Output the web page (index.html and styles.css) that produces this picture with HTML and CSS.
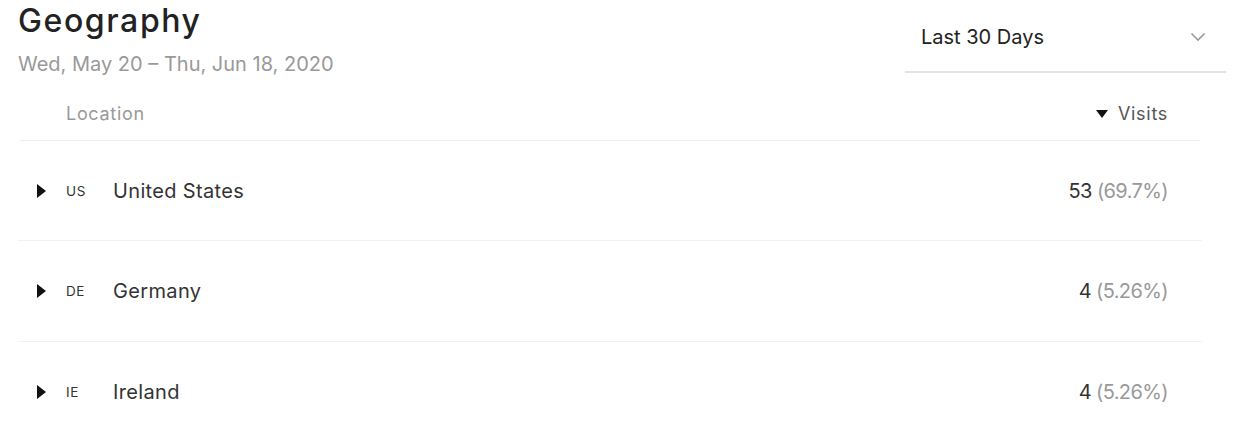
FILE: index.html
```html
<!DOCTYPE html>
<html>
<head>
<meta charset="utf-8">
<link rel="stylesheet" href="styles.css">
</head>
<body>
<div class="panel">
  <div class="top">
    <div class="titles">
      <h1 class="title">Geography</h1>
      <div class="range">Wed, May 20 – Thu, Jun 18, 2020</div>
    </div>
    <div class="select">
      <span>Last 30 Days</span>
      <svg class="chev" width="16" height="10" viewBox="0 0 16 10"><path d="M1.5 1.5 L8 8 L14.5 1.5" fill="none" stroke="#9a9a9a" stroke-width="1.6"/></svg>
    </div>
  </div>
  <div class="table">
    <div class="thead">
      <span class="th-loc">Location</span>
      <span class="th-visits"><svg class="sort" width="12" height="8" viewBox="0 0 12 8"><path d="M0 0 H12 L6 8 Z" fill="#111"/></svg>Visits</span>
    </div>
    <div class="rows">
      <div class="row">
        <svg class="caret" width="9" height="14" viewBox="0 0 9 14"><path d="M0 0 L9 7 L0 14 Z" fill="#111"/></svg>
        <span class="code">US</span>
        <span class="name">United States</span>
        <span class="val">53 <span class="pct">(69.7%)</span></span>
      </div>
      <div class="row">
        <svg class="caret" width="9" height="14" viewBox="0 0 9 14"><path d="M0 0 L9 7 L0 14 Z" fill="#111"/></svg>
        <span class="code">DE</span>
        <span class="name">Germany</span>
        <span class="val">4 <span class="pct">(5.26%)</span></span>
      </div>
      <div class="row">
        <svg class="caret" width="9" height="14" viewBox="0 0 9 14"><path d="M0 0 L9 7 L0 14 Z" fill="#111"/></svg>
        <span class="code">IE</span>
        <span class="name">Ireland</span>
        <span class="val">4 <span class="pct">(5.26%)</span></span>
      </div>
    </div>
  </div>
</div>
</body>
</html>
```
FILE: styles.css
```css
html, body {
  margin: 0;
  padding: 0;
  background: #fff;
}
body {
  font-family: Inter, "Noto Sans", "Liberation Sans", sans-serif;
  color: #333;
}
.panel {
  padding-left: 18px;
  width: 1208px;
}
.top {
  display: flex;
  justify-content: space-between;
  align-items: flex-start;
}
.titles {
  padding-top: 3px;
}
.title {
  margin: 0;
  font-family: Inter, sans-serif;
  font-weight: 500;
  font-size: 32px;
  line-height: 36px;
  color: #222;
  letter-spacing: 1.6px;
}
.range {
  margin-top: 12px;
  font-size: 20px;
  line-height: 26px;
  color: #999;
  letter-spacing: 0;
}
.select {
  width: 321px;
  box-sizing: border-box;
  height: 71px;
  border-bottom: 2px solid #e3e3e3;
  display: flex;
  align-items: center;
  justify-content: space-between;
  padding: 0 20px 0 16px;
  margin-top: 2px;
  font-size: 20px;
  color: #222;
}
.chev {
  display: block;
}
.table {
  width: 1184px;
  margin-top: 13px;
}
.thead {
  height: 51px;
  margin: 0 2px;
  border-bottom: 1px solid #efefef;
  display: flex;
  align-items: center;
  justify-content: space-between;
  padding: 0 32px 3px 46px;
  box-sizing: border-box;
  font-size: 18px;
  color: #999;
  letter-spacing: 0.7px;
}
.th-visits {
  display: flex;
  align-items: center;
  color: #555;
}
.sort {
  margin-right: 10px;
}
.row {
  height: 100px;
  border-bottom: 1px solid #f1f1f1;
  display: flex;
  align-items: center;
  padding: 0 34px 0 19px;
}
.row:first-child {
  height: 99px;
}
.caret {
  display: block;
  flex: none;
}
.code {
  width: 47px;
  margin-left: 20px;
  font-size: 13.5px;
  color: #333;
  letter-spacing: 0.6px;
}
.name {
  flex: 1;
  font-size: 20px;
  color: #333;
  letter-spacing: 0.35px;
}
.val {
  font-size: 20px;
  color: #333;
  letter-spacing: -0.6px;
}
.pct {
  color: #999;
}
```
